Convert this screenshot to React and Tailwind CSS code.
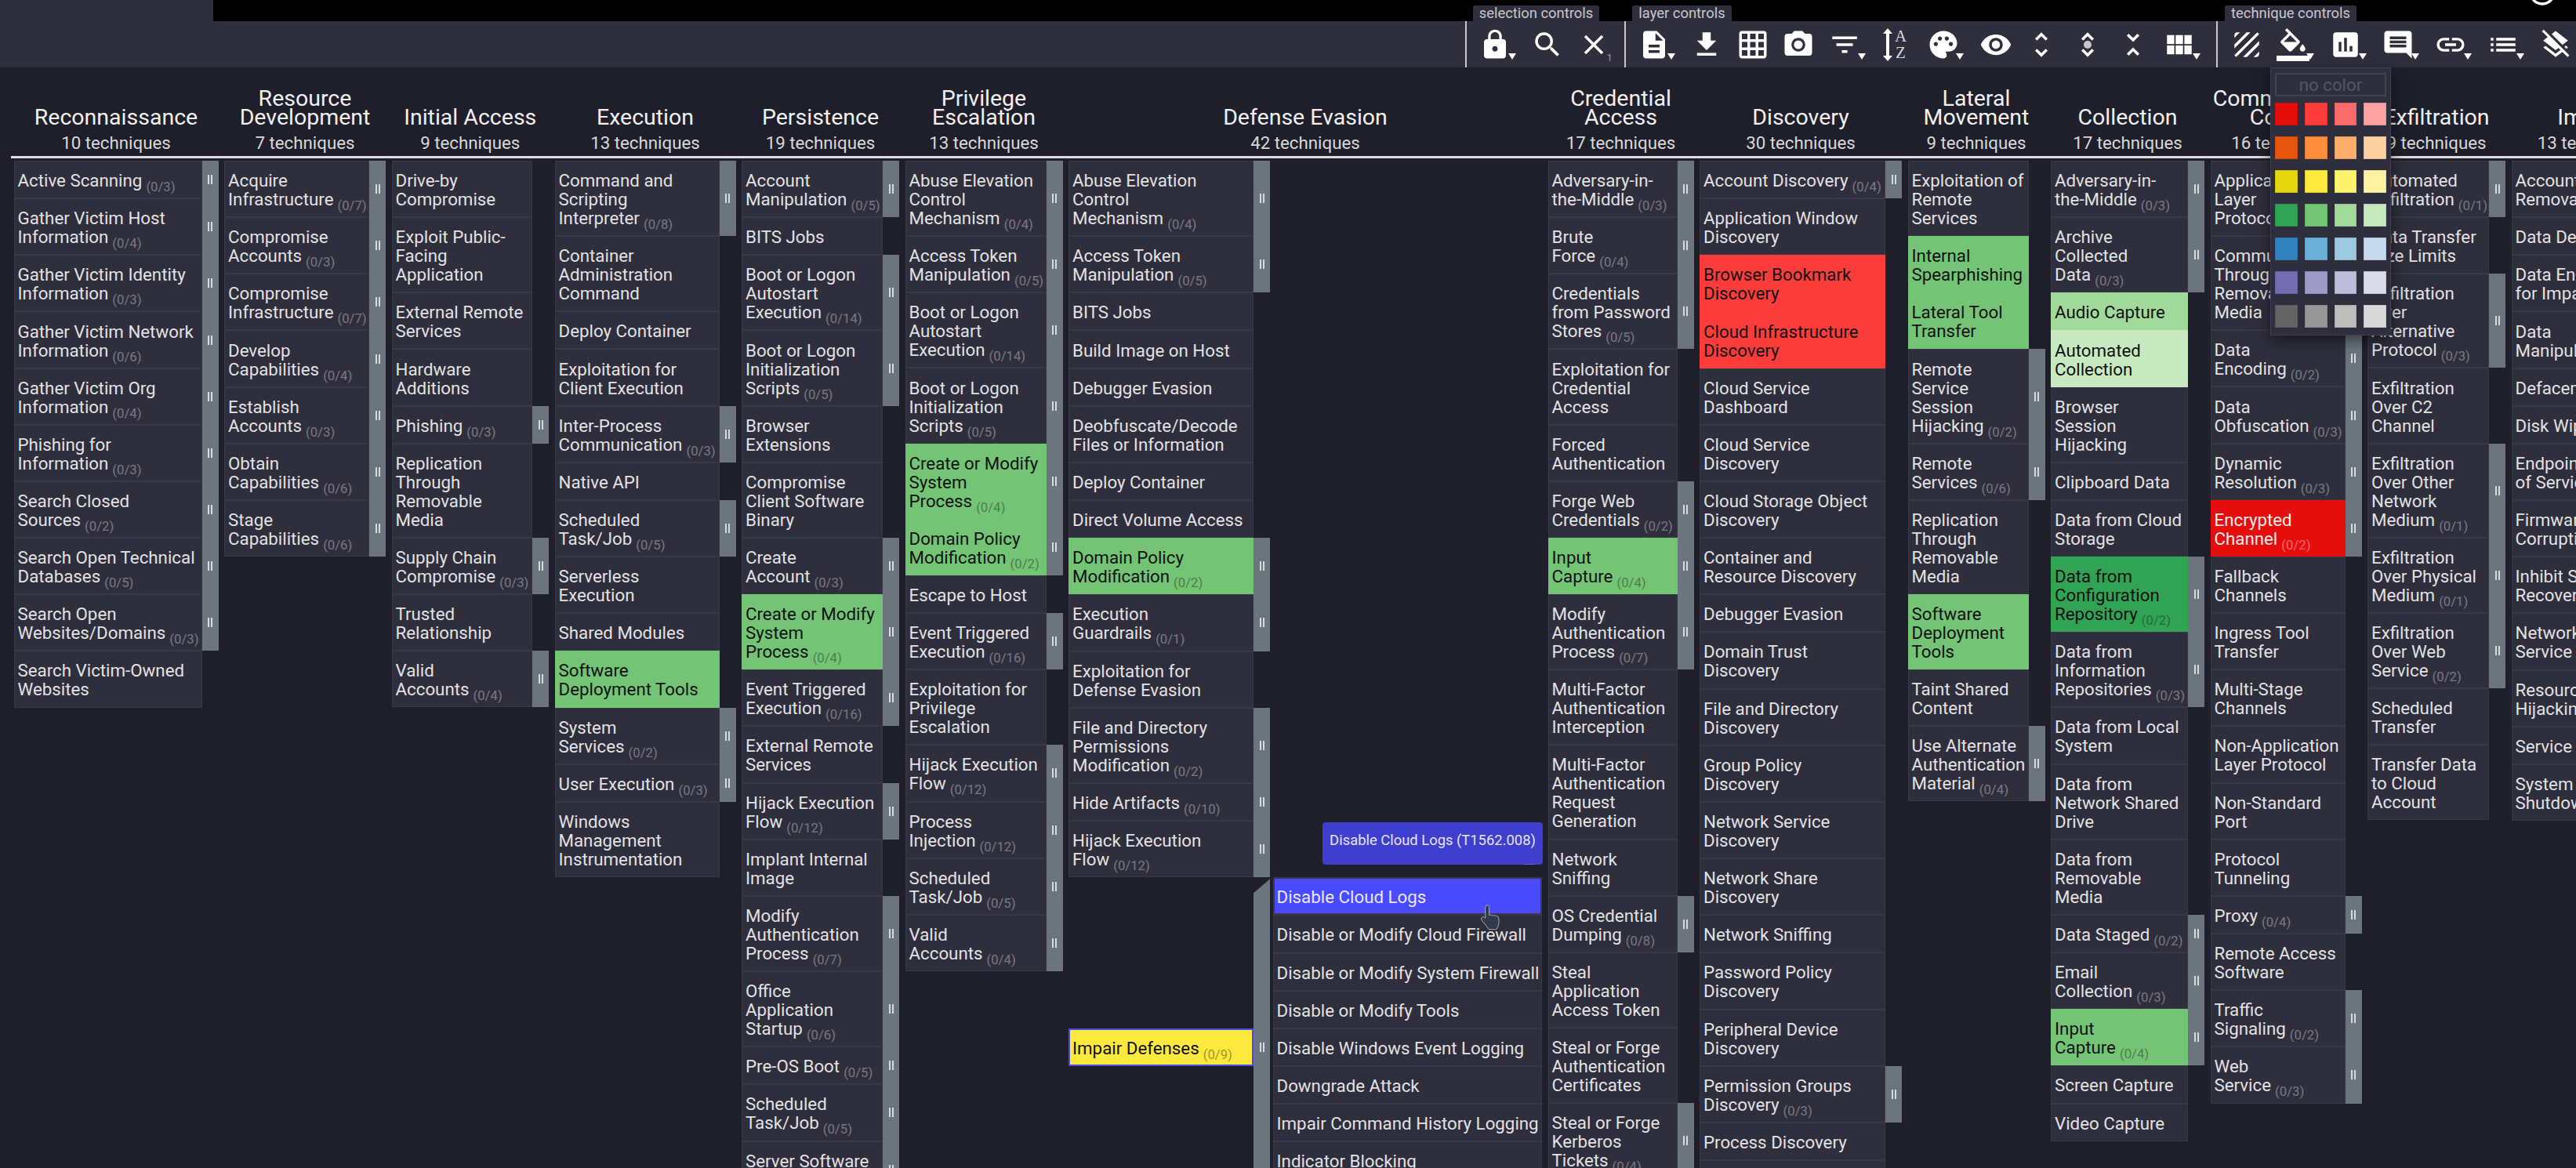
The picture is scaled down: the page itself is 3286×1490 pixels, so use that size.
import {
  MdLock, MdSearch, MdClear, MdDescription, MdFileDownload, MdGridOn, MdPhotoCamera, MdFilterList,
  MdPalette, MdVisibility, MdUnfoldMore, MdUnfoldLess, MdViewModule, MdTexture, MdAssessment,
  MdComment, MdLink, MdList, MdLayersClear, MdInfoOutline,
} from "react-icons/md";

// cell colour variants
const tones = {
  none: "bg-[#2f2e3d] border-[#393846] text-[#e2e2e2]",
  green: "bg-[#74c476] border-[#74c476] text-[#111111]",
  lime: "bg-[#a1d99b] border-[#a1d99b] text-[#111111]",
  pale: "bg-[#c7e9c0] border-[#c7e9c0] text-[#111111]",
  deep: "bg-[#31a354] border-[#31a354] text-[#111111]",
  coral: "bg-[#fc3b3b] border-[#fc3b3b] text-[#111111]",
  red: "bg-[#e60d0d] border-[#e60d0d] text-[#eeeeee]",
};

const t = (name, count, tone) => ({ name, count, tone });

const tactics = [
  {
    title: "Reconnaissance", total: "10 techniques", col: "w-[261px]", cell: "w-[240px]",
    rows: [
      t("Active Scanning", "0/3"), t("Gather Victim Host|Information", "0/4"), t("Gather Victim Identity|Information", "0/3"),
      t("Gather Victim Network|Information", "0/6"), t("Gather Victim Org|Information", "0/4"), t("Phishing for|Information", "0/3"),
      t("Search Closed|Sources", "0/2"), t("Search Open Technical|Databases", "0/5"), t("Search Open|Websites/Domains", "0/3"),
      t("Search Victim-Owned|Websites"),
    ],
  },
  {
    title: "Resource|Development", total: "7 techniques", col: "w-[206px]", cell: "w-[185px]",
    rows: [
      t("Acquire|Infrastructure", "0/7"), t("Compromise|Accounts", "0/3"), t("Compromise|Infrastructure", "0/7"),
      t("Develop|Capabilities", "0/4"), t("Establish|Accounts", "0/3"), t("Obtain|Capabilities", "0/6"), t("Stage|Capabilities", "0/6"),
    ],
  },
  {
    title: "Initial Access", total: "9 techniques", col: "w-[200.5px]", cell: "w-[179.5px]",
    rows: [
      t("Drive-by|Compromise"), t("Exploit Public-|Facing|Application"), t("External Remote|Services"), t("Hardware|Additions"),
      t("Phishing", "0/3"), t("Replication|Through|Removable|Media"), t("Supply Chain|Compromise", "0/3"),
      t("Trusted|Relationship"), t("Valid|Accounts", "0/4"),
    ],
  },
  {
    title: "Execution", total: "13 techniques", col: "w-[231px]", cell: "w-[210px]",
    rows: [
      t("Command and|Scripting|Interpreter", "0/8"), t("Container|Administration|Command"), t("Deploy Container"),
      t("Exploitation for|Client Execution"), t("Inter-Process|Communication", "0/3"), t("Native API"), t("Scheduled|Task/Job", "0/5"),
      t("Serverless|Execution"), t("Shared Modules"), t("Software|Deployment Tools", null, "green"), t("System|Services", "0/2"),
      t("User Execution", "0/3"), t("Windows|Management|Instrumentation"),
    ],
  },
  {
    title: "Persistence", total: "19 techniques", col: "w-[201px]", cell: "w-[180px]",
    rows: [
      t("Account|Manipulation", "0/5"), t("BITS Jobs"), t("Boot or Logon|Autostart|Execution", "0/14"),
      t("Boot or Logon|Initialization|Scripts", "0/5"), t("Browser|Extensions"), t("Compromise|Client Software|Binary"),
      t("Create|Account", "0/3"), t("Create or Modify|System|Process", "0/4", "green"), t("Event Triggered|Execution", "0/16"),
      t("External Remote|Services"), t("Hijack Execution|Flow", "0/12"), t("Implant Internal|Image"),
      t("Modify|Authentication|Process", "0/7"), t("Office|Application|Startup", "0/6"), t("Pre-OS Boot", "0/5"),
      t("Scheduled|Task/Job", "0/5"), t("Server Software|Component", "0/5"),
    ],
  },
  {
    title: "Privilege|Escalation", total: "13 techniques", col: "w-[201px]", cell: "w-[180px]",
    rows: [
      t("Abuse Elevation|Control|Mechanism", "0/4"), t("Access Token|Manipulation", "0/5"), t("Boot or Logon|Autostart|Execution", "0/14"),
      t("Boot or Logon|Initialization|Scripts", "0/5"), t("Create or Modify|System|Process", "0/4", "green"),
      t("Domain Policy|Modification", "0/2", "green"), t("Escape to Host"), t("Event Triggered|Execution", "0/16"),
      t("Exploitation for|Privilege|Escalation"), t("Hijack Execution|Flow", "0/12"), t("Process|Injection", "0/12"),
      t("Scheduled|Task/Job", "0/5"), t("Valid|Accounts", "0/4"),
    ],
  },
  {
    title: "Defense Evasion", total: "42 techniques", col: "w-[604px]", cell: "w-[236px]",
    rows: [
      t("Abuse Elevation|Control|Mechanism", "0/4"), t("Access Token|Manipulation", "0/5"), t("BITS Jobs"), t("Build Image on Host"),
      t("Debugger Evasion"), t("Deobfuscate/Decode|Files or Information"), t("Deploy Container"), t("Direct Volume Access"),
      t("Domain Policy|Modification", "0/2", "green"), t("Execution|Guardrails", "0/1"), t("Exploitation for|Defense Evasion"),
      t("File and Directory|Permissions|Modification", "0/2"), t("Hide Artifacts", "0/10"), t("Hijack Execution|Flow", "0/12"),
    ],
    expanded: {
      parent: t("Impair Defenses", "0/9"),
      subs: [
        "Disable Cloud Logs", "Disable or Modify Cloud Firewall", "Disable or Modify System Firewall", "Disable or Modify Tools",
        "Disable Windows Event Logging", "Downgrade Attack", "Impair Command History Logging", "Indicator Blocking", "Safe Mode Boot",
      ],
    },
  },
  {
    title: "Credential|Access", total: "17 techniques", col: "w-[186px]", cell: "w-[165px]",
    rows: [
      t("Adversary-in-|the-Middle", "0/3"), t("Brute|Force", "0/4"), t("Credentials|from Password|Stores", "0/5"),
      t("Exploitation for|Credential|Access"), t("Forced|Authentication"), t("Forge Web|Credentials", "0/2"),
      t("Input|Capture", "0/4", "green"), t("Modify|Authentication|Process", "0/7"), t("Multi-Factor|Authentication|Interception"),
      t("Multi-Factor|Authentication|Request|Generation"), t("Network|Sniffing"), t("OS Credential|Dumping", "0/8"),
      t("Steal|Application|Access Token"), t("Steal or Forge|Authentication|Certificates"), t("Steal or Forge|Kerberos|Tickets", "0/4"),
    ],
  },
  {
    title: "Discovery", total: "30 techniques", col: "w-[258px]", cell: "w-[237px]",
    rows: [
      t("Account Discovery", "0/4"), t("Application Window|Discovery"), t("Browser Bookmark|Discovery", null, "coral"),
      t("Cloud Infrastructure|Discovery", null, "coral"), t("Cloud Service|Dashboard"), t("Cloud Service|Discovery"),
      t("Cloud Storage Object|Discovery"), t("Container and|Resource Discovery"), t("Debugger Evasion"), t("Domain Trust|Discovery"),
      t("File and Directory|Discovery"), t("Group Policy|Discovery"), t("Network Service|Discovery"), t("Network Share|Discovery"),
      t("Network Sniffing"), t("Password Policy|Discovery"), t("Peripheral Device|Discovery"), t("Permission Groups|Discovery", "0/3"),
      t("Process Discovery"), t("Query Registry"),
    ],
  },
  {
    title: "Lateral|Movement", total: "9 techniques", col: "w-[175px]", cell: "w-[154px]",
    rows: [
      t("Exploitation of|Remote|Services"), t("Internal|Spearphishing", null, "green"), t("Lateral Tool|Transfer", null, "green"),
      t("Remote|Service|Session|Hijacking", "0/2"), t("Remote|Services", "0/6"), t("Replication|Through|Removable|Media"),
      t("Software|Deployment|Tools", null, "green"), t("Taint Shared|Content"), t("Use Alternate|Authentication|Material", "0/4"),
    ],
  },
  {
    title: "Collection", total: "17 techniques", col: "w-[196px]", cell: "w-[175px]",
    rows: [
      t("Adversary-in-|the-Middle", "0/3"), t("Archive|Collected|Data", "0/3"), t("Audio Capture", null, "lime"),
      t("Automated|Collection", null, "pale"), t("Browser|Session|Hijacking"), t("Clipboard Data"), t("Data from Cloud|Storage"),
      t("Data from|Configuration|Repository", "0/2", "deep"), t("Data from|Information|Repositories", "0/3"), t("Data from Local|System"),
      t("Data from|Network Shared|Drive"), t("Data from|Removable|Media"), t("Data Staged", "0/2"), t("Email|Collection", "0/3"),
      t("Input|Capture", "0/4", "green"), t("Screen Capture"), t("Video Capture"),
    ],
  },
  {
    title: "Command and|Control", total: "16 techniques", col: "w-[193px]", cell: "w-[172px]",
    rows: [
      t("Application|Layer|Protocol", "0/4"), t("Communication|Through|Removable|Media"), t("Data|Encoding", "0/2"),
      t("Data|Obfuscation", "0/3"), t("Dynamic|Resolution", "0/3"), t("Encrypted|Channel", "0/2", "red"), t("Fallback|Channels"),
      t("Ingress Tool|Transfer"), t("Multi-Stage|Channels"), t("Non-Application|Layer Protocol"), t("Non-Standard|Port"),
      t("Protocol|Tunneling"), t("Proxy", "0/4"), t("Remote Access|Software"), t("Traffic|Signaling", "0/2"), t("Web|Service", "0/3"),
    ],
  },
  {
    title: "Exfiltration", total: "9 techniques", col: "w-[176px]", cell: "w-[155px]",
    rows: [
      t("Automated|Exfiltration", "0/1"), t("Data Transfer|Size Limits"), t("Exfiltration|Over|Alternative|Protocol", "0/3"),
      t("Exfiltration|Over C2|Channel"), t("Exfiltration|Over Other|Network|Medium", "0/1"), t("Exfiltration|Over Physical|Medium", "0/1"),
      t("Exfiltration|Over Web|Service", "0/2"), t("Scheduled|Transfer"), t("Transfer Data|to Cloud|Account"),
    ],
  },
  {
    title: "Impact", total: "13 techniques", col: "w-[206px]", cell: "w-[185px]",
    rows: [
      t("Account Access|Removal"), t("Data Destruction"), t("Data Encrypted|for Impact"), t("Data|Manipulation", "0/3"), t("Defacement", "0/2"),
      t("Disk Wipe", "0/2"), t("Endpoint Denial|of Service", "0/4"), t("Firmware|Corruption"), t("Inhibit System|Recovery"),
      t("Network Denial of|Service", "0/2"), t("Resource|Hijacking"), t("Service Stop"), t("System|Shutdown/Reboot"),
    ],
  },
];

const swatches = [
  ["bg-[#e60d0d]", "bg-[#fc3b3b]", "bg-[#fc6b6b]", "bg-[#fca2a2]"],
  ["bg-[#e6550d]", "bg-[#fd8d3c]", "bg-[#fdae6b]", "bg-[#fdd0a2]"],
  ["bg-[#e6d60d]", "bg-[#fce93b]", "bg-[#fcf26b]", "bg-[#fcf3a2]"],
  ["bg-[#31a354]", "bg-[#74c476]", "bg-[#a1d99b]", "bg-[#c7e9c0]"],
  ["bg-[#3182bd]", "bg-[#6baed6]", "bg-[#9ecae1]", "bg-[#c6dbef]"],
  ["bg-[#756bb1]", "bg-[#9e9ac8]", "bg-[#bcbddc]", "bg-[#dadaeb]"],
  ["bg-[#636363]", "bg-[#969696]", "bg-[#bdbdbd]", "bg-[#d9d9d9]"],
];

const Handle = () => (
  <div className="flex gap-[2px]">
    <div className="w-[2px] h-[12px] bg-[#d8dadc]" />
    <div className="w-[2px] h-[12px] bg-[#d8dadc]" />
  </div>
);

const Count = ({ value }) => (
  <span className="relative top-[6px] ml-[5px] text-[16.7px] leading-none opacity-40">({value})</span>
);

const Cell = ({ row, cell }) => {
  const lines = row.name.split("|");
  return (
    <div className={`${cell} shrink-0 border px-[4px] pt-[12.09px] pb-[10.09px] leading-[24px] whitespace-nowrap ${tones[row.tone || "none"]}`}>
      {lines.map((line, i) => (
        <div key={i}>
          {line}
          {i === lines.length - 1 && row.count && <Count value={row.count} />}
        </div>
      ))}
    </div>
  );
};

const Row = ({ row, cell }) => (
  <div className="flex">
    <Cell row={row} cell={cell} />
    {row.count && (
      <div className="w-[21px] shrink-0 bg-[#6c757d] flex items-center justify-center">
        <Handle />
      </div>
    )}
  </div>
);

// Impair Defenses with its subtechniques opened out
const Expanded = ({ data, cell }) => (
  <div className="flex items-center">
    <div className={`${cell} shrink-0 border-2 border-[#4a4ae8] bg-[#fce93b] text-[#111111] px-[3px] pt-[11.09px] pb-[9.09px] leading-[24px] whitespace-nowrap`}>
      {data.parent.name}
      <Count value={data.parent.count} />
    </div>
    <div className="w-[21px] shrink-0 self-stretch bg-[#6c757d] flex items-center justify-center [clip-path:polygon(100%_2px,100%_100%,0_100%,0_20px)]">
      <Handle />
    </div>
    <div className="ml-[3.5px] w-[343.5px] shrink-0">
      {data.subs.map((name, i) => (
        <div
          key={name}
          className={
            i === 0
              ? "border-2 border-[#393846] bg-[#4a4aff] text-[#e8e8ff] px-[3px] pt-[11.09px] pb-[9.09px] leading-[24px] whitespace-nowrap"
              : "border border-[#393846] bg-[#2f2e3d] text-[#e2e2e2] px-[4px] pt-[12.09px] pb-[10.09px] leading-[24px] whitespace-nowrap"
          }
        >
          {name}
        </div>
      ))}
    </div>
  </div>
);

const Caret = () => (
  <div className="absolute left-[46px] top-[41px] w-0 h-0 border-l-[5px] border-r-[5px] border-t-[8px] border-l-transparent border-r-transparent border-t-white" />
);

const Tool = ({ children, menu, extra }) => (
  <div className={`relative h-[59px] flex items-center justify-start shrink-0 text-white ${menu ? "w-[67px]" : "w-[58.6px]"}`}>
    <div className="w-[58.6px] flex items-center justify-center">{children}</div>
    {menu && <Caret />}
    {extra}
  </div>
);

const Tab = ({ className, children }) => (
  <div className={`absolute -top-[20px] h-[20px] rounded-t-[3px] bg-[#2f2e3d] text-[#c8c8cc] text-[18.4px] leading-[20px] text-center whitespace-nowrap ${className}`}>
    {children}
  </div>
);

const SortIcon = () => (
  <div className="relative w-[42px] h-[44px]">
    <svg viewBox="0 0 12 42" className="absolute left-[3px] top-0 w-[12px] h-[44px]" fill="white">
      <path d="M6 0 L12 7 H8 V35 H12 L6 42 L0 35 H4 V7 H0 Z" />
    </svg>
    <div className="absolute left-[18px] top-[1px] text-[#d8d8d8] text-[21px] leading-[21px] font-['Liberation_Serif',serif]">A</div>
    <div className="absolute left-[19px] top-[22px] text-[#d8d8d8] text-[21px] leading-[21px] font-['Liberation_Serif',serif]">Z</div>
  </div>
);

const UnfoldDots = () => (
  <div className="relative">
    <MdUnfoldMore size={42} />
    <div className="absolute left-[16px] top-[16px] w-[10px] h-[10px] rounded-full bg-[#c8c8c8]" />
  </div>
);

const Bucket = () => (
  <svg viewBox="0 0 24 24" width="42" height="42" fill="white">
    <path d="M16.56 8.94 7.62 0 6.21 1.41l2.38 2.38-5.15 5.15a1.49 1.49 0 0 0 0 2.12l5.5 5.5c.29.29.68.44 1.06.44s.77-.15 1.06-.44l5.5-5.5c.59-.58.59-1.53 0-2.12zM5.21 10 10 5.21 14.79 10H5.21zM19 11.5s-2 2.17-2 3.5c0 1.1.9 2 2 2s2-.9 2-2c0-1.33-2-3.5-2-3.5zM0 20h24v4H0z" />
  </svg>
);

const Toolbar = () => (
  <div className="flex h-[59px] bg-[#2f2e3d] pl-[1869px] overflow-visible">
    <div className="relative w-[203px] shrink-0 border-l-2 border-[#c8c8cc] pl-[7px] flex">
      <Tab className="left-[8px] w-[161px]">selection controls</Tab>
      <Tool menu><MdLock size={42} /></Tool>
      <Tool><MdSearch size={42} /></Tool>
      <Tool extra={<span className="absolute left-[46px] top-[39px] text-[13px] leading-[16px] text-[#9a9aa0]">1</span>}>
        <MdClear size={42} />
      </Tool>
    </div>
    <div className="relative w-[755px] shrink-0 border-l-2 border-[#c8c8cc] pl-[7px] flex">
      <Tab className="left-[8px] w-[127px]">layer controls</Tab>
      <Tool menu><MdDescription size={42} /></Tool>
      <Tool><MdFileDownload size={42} /></Tool>
      <Tool><MdGridOn size={42} /></Tool>
      <Tool><MdPhotoCamera size={42} /></Tool>
      <Tool menu><MdFilterList size={42} /></Tool>
      <Tool><SortIcon /></Tool>
      <Tool menu><MdPalette size={42} /></Tool>
      <Tool><MdVisibility size={42} /></Tool>
      <Tool><MdUnfoldMore size={42} /></Tool>
      <Tool><UnfoldDots /></Tool>
      <Tool><MdUnfoldLess size={42} /></Tool>
      <Tool menu><MdViewModule size={42} /></Tool>
    </div>
    <div className="relative shrink-0 border-l-2 border-[#c8c8cc] pl-[8px] flex">
      <Tab className="left-[9px] w-[168px]">technique controls</Tab>
      <Tool><MdTexture size={42} /></Tool>
      <Tool menu><Bucket /></Tool>
      <Tool menu><MdAssessment size={42} /></Tool>
      <Tool menu><MdComment size={42} /></Tool>
      <Tool menu><MdLink size={42} /></Tool>
      <Tool menu><MdList size={42} /></Tool>
      <Tool><MdLayersClear size={42} /></Tool>
    </div>
  </div>
);

const ColorPicker = () => (
  <div className="absolute left-[2896px] top-[86px] w-[154px] h-[342px] z-10 bg-[#2f2e3d] border border-[#3f3e52] shadow-[0_6px_18px_rgba(0,0,0,0.5)] px-[5px] pt-[6px]">
    <div className="h-[30px] border-2 border-[#42414f] text-center text-[22.3px] leading-[26px] text-[#55546a]">no color</div>
    <div className="mt-[8px] flex flex-col gap-[14px]">
      {swatches.map((line) => (
        <div key={line[0]} className="flex gap-[9px]">
          {line.map((c) => (
            <div key={c} className={`w-[29px] h-[29px] border border-black/10 ${c}`} />
          ))}
        </div>
      ))}
    </div>
  </div>
);

const Tooltip = () => (
  <div className="absolute left-[1687px] top-[1049px] w-[281px] h-[54px] z-10 rounded-[4px] bg-[#3f3fcf] text-[#e4e4ff] text-[18.4px] leading-[46px] text-center whitespace-nowrap">
    Disable Cloud Logs (T1562.008)
    <div className="absolute right-[10px] bottom-0 w-[14px] h-[1px] bg-[#6a6ae0]" />
  </div>
);

const HandCursor = () => (
  <svg viewBox="0 0 24 27" className="absolute left-[1886px] top-[1153px] w-[33px] h-[36px] z-10" fill="#2f3a4a" stroke="#aeb4ba" strokeWidth="0.7" strokeLinejoin="round">
    <path d="M8 1.5c1 0 1.8.8 1.8 1.8V11c.8-.7 2.4-.6 3 .3.8-.6 2.3-.4 2.9.5.9-.5 2.4-.2 2.9.9.6 1.2.6 5 .2 7-.3 1.8-1.2 3.200-2 4.800H9.500c-1-1.700-2.400-3.400-3.600-4.900L2.800 15.800c-.8-1-.6-2.300.3-2.900.9-.6 2-.4 2.800.5l.3.300V3.300C6.200 2.300 7 1.500 8 1.500z" />
  </svg>
);

const App = () => (
  <div className="relative w-[3286px] h-[1490px] overflow-hidden bg-[#1f1f2b] font-['Roboto',sans-serif] text-[22.3px]">
    {/* top black strip */}
    <div className="relative flex h-[27px]">
      <div className="w-[272px] bg-[#2f2e3d]" />
      <div className="flex-1 bg-black" />
      <MdInfoOutline size={40} className="absolute left-[3223px] -top-[30px] text-white" />
    </div>
    <Toolbar />

    {/* tactic headers */}
    <div className="ml-[14px] pl-[3.5px] h-[116px] flex gap-[7.5px] border-b-[3px] border-[#dddddd] items-end">
      {tactics.map((tac) => (
        <div key={tac.title} className={`${tac.col} shrink-0 text-center text-[#f0f0f0] pb-[1px]`}>
          <div className="text-[28.5px] leading-[24px]">
            {tac.title.split("|").map((line) => (
              <div key={line}>{line}</div>
            ))}
          </div>
          <div className="mt-[4px] text-[22.3px] leading-[32px] text-[#d8d8d8] whitespace-nowrap">{tac.total}</div>
        </div>
      ))}
    </div>

    {/* technique columns */}
    <div className="pl-[17.5px] pt-[3px] flex gap-[7.5px]">
      {tactics.map((tac) => (
        <div key={tac.title} className={`${tac.col} shrink-0`}>
          {tac.rows.map((row) => (
            <Row key={row.name} row={row} cell={tac.cell} />
          ))}
          {tac.expanded && <Expanded data={tac.expanded} cell={tac.cell} />}
        </div>
      ))}
    </div>

    <ColorPicker />
    <Tooltip />
    <HandCursor />
  </div>
);

export default App;
